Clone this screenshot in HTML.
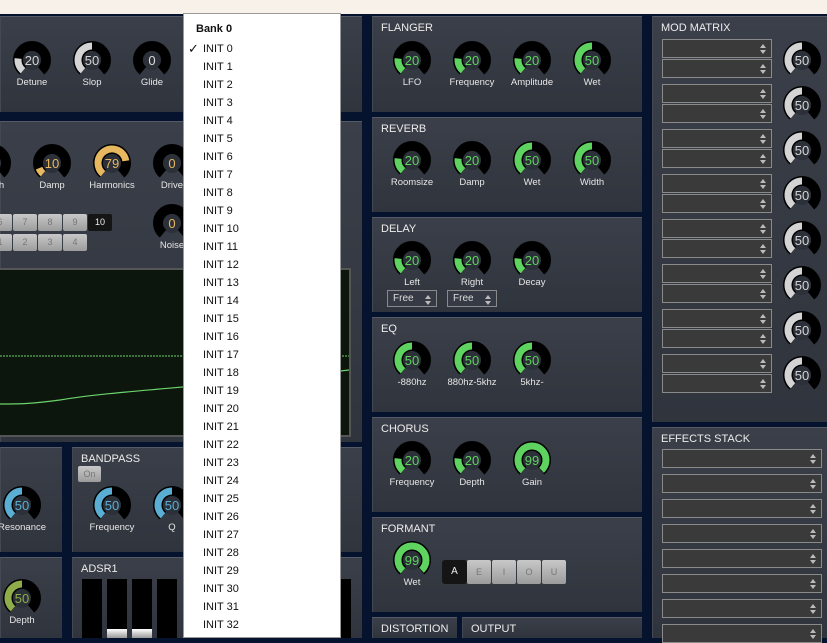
<!DOCTYPE html>
<html><head><meta charset="utf-8"><style>
*{margin:0;padding:0;box-sizing:border-box}
body{width:827px;height:638px;overflow:hidden;background:#06132e;font-family:"Liberation Sans",sans-serif;position:relative}
.p{position:absolute;background:linear-gradient(#3b3f49,#30343d);border-top:1px solid #555a64;border-left:1px solid #444852}
.t{position:absolute;color:#ececec;font-size:11px;left:8px;top:5px}
.k{position:absolute;width:60px;text-align:center}
.k svg{display:block;margin:0 auto}
.k span{display:block;color:#e6e6e6;font-size:9.5px;margin-top:-1px}
.sel{position:absolute;height:19px;background:#3a3a3a;border:1px solid #8a8a8a}
.sel:after{content:"";position:absolute;right:5px;top:4px;width:0;height:0;border-left:3px solid transparent;border-right:3px solid transparent;border-bottom:4px solid #bbb;}
.sel:before{content:"";position:absolute;right:5px;top:10px;width:0;height:0;border-left:3px solid transparent;border-right:3px solid transparent;border-top:4px solid #bbb;}
.b{position:absolute;width:24px;height:17px;background:linear-gradient(#c8c8c8,#9c9c9c);border-radius:2px;color:#777;font-size:9px;text-align:center;line-height:17px}
.dd{position:absolute;left:183px;top:13px;width:158px;height:625px;background:#fff;border:1px solid #999;font-size:11px;color:#111}
.dd div{position:absolute;left:19px}
</style></head><body>
<div style="position:absolute;left:0;top:0;width:827px;height:14px;background:#f8f1e9"></div>

<div class="p" style="left:0;top:16px;width:362px;height:96px"></div>
<div class="p" style="left:0;top:121px;width:362px;height:321px"></div>
<div style="position:absolute;left:0;top:268px;width:351px;height:169px;background:#0d160d;border:2px solid #555;border-left:none">
<svg width="349" height="165" style="position:absolute;left:0;top:0"><line x1="0" y1="86" x2="349" y2="86" stroke="#6bd36b" stroke-dasharray="2,1" stroke-width="1"/><path d="M0 134 C20 134 30 134 60 130 C120 120 200 118 349 100" stroke="#6bd36b" fill="none" stroke-width="1.2"/></svg></div>
<div class="p" style="left:0;top:447px;width:62px;height:105px"></div>
<div class="p" style="left:72px;top:447px;width:290px;height:105px"><div class="t">BANDPASS</div><div class="b" style="left:5px;top:18px;width:23px;height:16px;line-height:16px">On</div></div>
<div class="p" style="left:0;top:557px;width:62px;height:81px"></div>
<div class="p" style="left:72px;top:557px;width:290px;height:81px"><div class="t">ADSR1</div></div>
<div style="position:absolute;left:82px;top:579px;width:20px;height:59px;background:#000"></div>
<div style="position:absolute;left:107px;top:579px;width:20px;height:59px;background:#000"></div>
<div style="position:absolute;left:107px;top:629px;width:20px;height:9px;background:linear-gradient(#fff,#999)"></div>
<div style="position:absolute;left:132px;top:579px;width:20px;height:59px;background:#000"></div>
<div style="position:absolute;left:132px;top:629px;width:20px;height:9px;background:linear-gradient(#fff,#999)"></div>
<div style="position:absolute;left:157px;top:579px;width:20px;height:59px;background:#000"></div>
<div style="position:absolute;left:341px;top:579px;width:10px;height:59px;background:#000"></div>

<div id="btns"></div>

<div class="p" style="left:372px;top:16px;width:270px;height:96px"><div class="t">FLANGER</div></div>
<div class="p" style="left:372px;top:117px;width:270px;height:95px"><div class="t">REVERB</div></div>
<div class="p" style="left:372px;top:217px;width:270px;height:95px"><div class="t">DELAY</div></div>
<div class="p" style="left:372px;top:317px;width:270px;height:95px"><div class="t">EQ</div></div>
<div class="p" style="left:372px;top:417px;width:270px;height:95px"><div class="t">CHORUS</div></div>
<div class="p" style="left:372px;top:517px;width:270px;height:95px"><div class="t">FORMANT</div></div>
<div class="p" style="left:372px;top:617px;width:85px;height:21px"><div class="t">DISTORTION</div></div>
<div class="p" style="left:462px;top:617px;width:180px;height:21px"><div class="t">OUTPUT</div></div>
<div class="sel" style="left:387px;top:290px;width:50px;height:17px;background:#353a44;color:#ddd;font-size:10px;padding:2px 5px">Free</div>
<div class="sel" style="left:447px;top:290px;width:50px;height:17px;background:#353a44;color:#ddd;font-size:10px;padding:2px 5px">Free</div>
<div style="position:absolute;left:442px;top:560px;width:25px;height:24px;background:#151515;border-radius:3px;color:#eee;font-size:10px;text-align:center;line-height:24px">A</div>
<div class="b" style="left:467px;top:560px;height:24px;line-height:24px">E</div>
<div class="b" style="left:492px;top:560px;height:24px;line-height:24px">I</div>
<div class="b" style="left:517px;top:560px;height:24px;line-height:24px">O</div>
<div class="b" style="left:542px;top:560px;height:24px;line-height:24px">U</div>

<div class="p" style="left:652px;top:16px;width:175px;height:406px"><div class="t">MOD MATRIX</div></div>
<div class="p" style="left:652px;top:427px;width:175px;height:211px"><div class="t">EFFECTS STACK</div></div>
<div id="sels"></div>
<div id="knobs"></div>

<div class="dd">
<div style="left:12px;top:9px;font-weight:bold">Bank 0</div>
<div style="left:4px;top:28px;font-size:13px;line-height:13px">✓</div>
<div id="items"></div>
</div>

<script>
var K=document.getElementById('knobs'),h='';
function pt(r,a){a=a*Math.PI/180;return [20+r*Math.sin(a),20-r*Math.cos(a)];}
function arc(r,a0,a1){var p=pt(r,a0),q=pt(r,a1);return 'M'+p[0].toFixed(2)+' '+p[1].toFixed(2)+' A'+r+' '+r+' 0 '+((a1-a0)>180?1:0)+' 1 '+q[0].toFixed(2)+' '+q[1].toFixed(2);}
function knob(x,y,v,c,lab,tc){
 var a1=-140+280*v/100;
 h+='<div class="k" style="left:'+(x-30)+'px;top:'+(y-20)+'px"><svg width="40" height="38" viewBox="0 0 40 38"><circle cx="20" cy="20" r="10" fill="#2c3038"/><path d="'+arc(14,-140,140)+'" stroke="#000" stroke-width="10" fill="none"/>'+(v>0?'<path d="'+arc(14,-140,a1)+'" stroke="'+c+'" stroke-width="7" fill="none"/>':'')+'<circle cx="20" cy="20" r="9" fill="#2c3038"/><text x="20" y="25" text-anchor="middle" font-family="Liberation Sans" font-size="13" fill="'+(tc||c)+'">'+v+'</text></svg>'+(lab?'<span>'+lab+'</span>':'')+'</div>';
}
var G='#5fd35f',W='#d4d4d4',O='#e8b860',B='#5aaed4',L='#8fac4a';
knob(32,60,20,W,'Detune');knob(92,60,50,W,'Slop');knob(152,60,0,W,'Glide','#ddd');
knob(-8,163,0,O,'Width');knob(52,163,10,O,'Damp');knob(112,163,79,O,'Harmonics');knob(172,163,0,O,'Drive');
knob(172,223,0,O,'Noise');
knob(22,505,50,B,'Resonance');knob(112,505,50,B,'Frequency');knob(172,505,50,B,'Q');
knob(22,598,50,L,'Depth');
var xs=[412,472,532,592];
[[20,'LFO'],[20,'Frequency'],[20,'Amplitude'],[50,'Wet']].forEach(function(e,i){knob(xs[i],60,e[0],G,e[1]);});
[[20,'Roomsize'],[20,'Damp'],[50,'Wet'],[50,'Width']].forEach(function(e,i){knob(xs[i],160,e[0],G,e[1]);});
[[20,'Left'],[20,'Right'],[20,'Decay']].forEach(function(e,i){knob(xs[i],260,e[0],G,e[1]);});
[[50,'-880hz'],[50,'880hz-5khz'],[50,'5khz-']].forEach(function(e,i){knob(xs[i],360,e[0],G,e[1]);});
[[20,'Frequency'],[20,'Depth'],[99,'Gain']].forEach(function(e,i){knob(xs[i],460,e[0],G,e[1]);});
knob(412,560,99,G,'Wet');
var s='';
for(var i=0;i<8;i++){var y=39+i*45;s+='<div class="sel" style="left:662px;top:'+y+'px;width:110px"></div><div class="sel" style="left:662px;top:'+(y+20)+'px;width:110px"></div>';knob(802,y+21,50,W,'');}
for(var i=0;i<8;i++){s+='<div class="sel" style="left:662px;top:'+(449+i*25)+'px;width:160px"></div>';}
document.getElementById('sels').innerHTML=s;
K.innerHTML=h;
var b='',r1=['6','7','8','9'],r2=['1','2','3','4'];
for(var i=0;i<4;i++){b+='<div class="b" style="left:'+(-12+i*25)+'px;top:214px">'+r1[i]+'</div><div class="b" style="left:'+(-12+i*25)+'px;top:234px">'+r2[i]+'</div>';}
b+='<div class="b" style="left:88px;top:214px;background:#151515;color:#eee">10</div>';
document.getElementById('btns').innerHTML=b;
var it='';for(var i=0;i<33;i++){it+='<div style="top:'+(29+i*18)+'px">INIT '+i+'</div>';}
document.getElementById('items').outerHTML=it;
</script>
</body></html>
